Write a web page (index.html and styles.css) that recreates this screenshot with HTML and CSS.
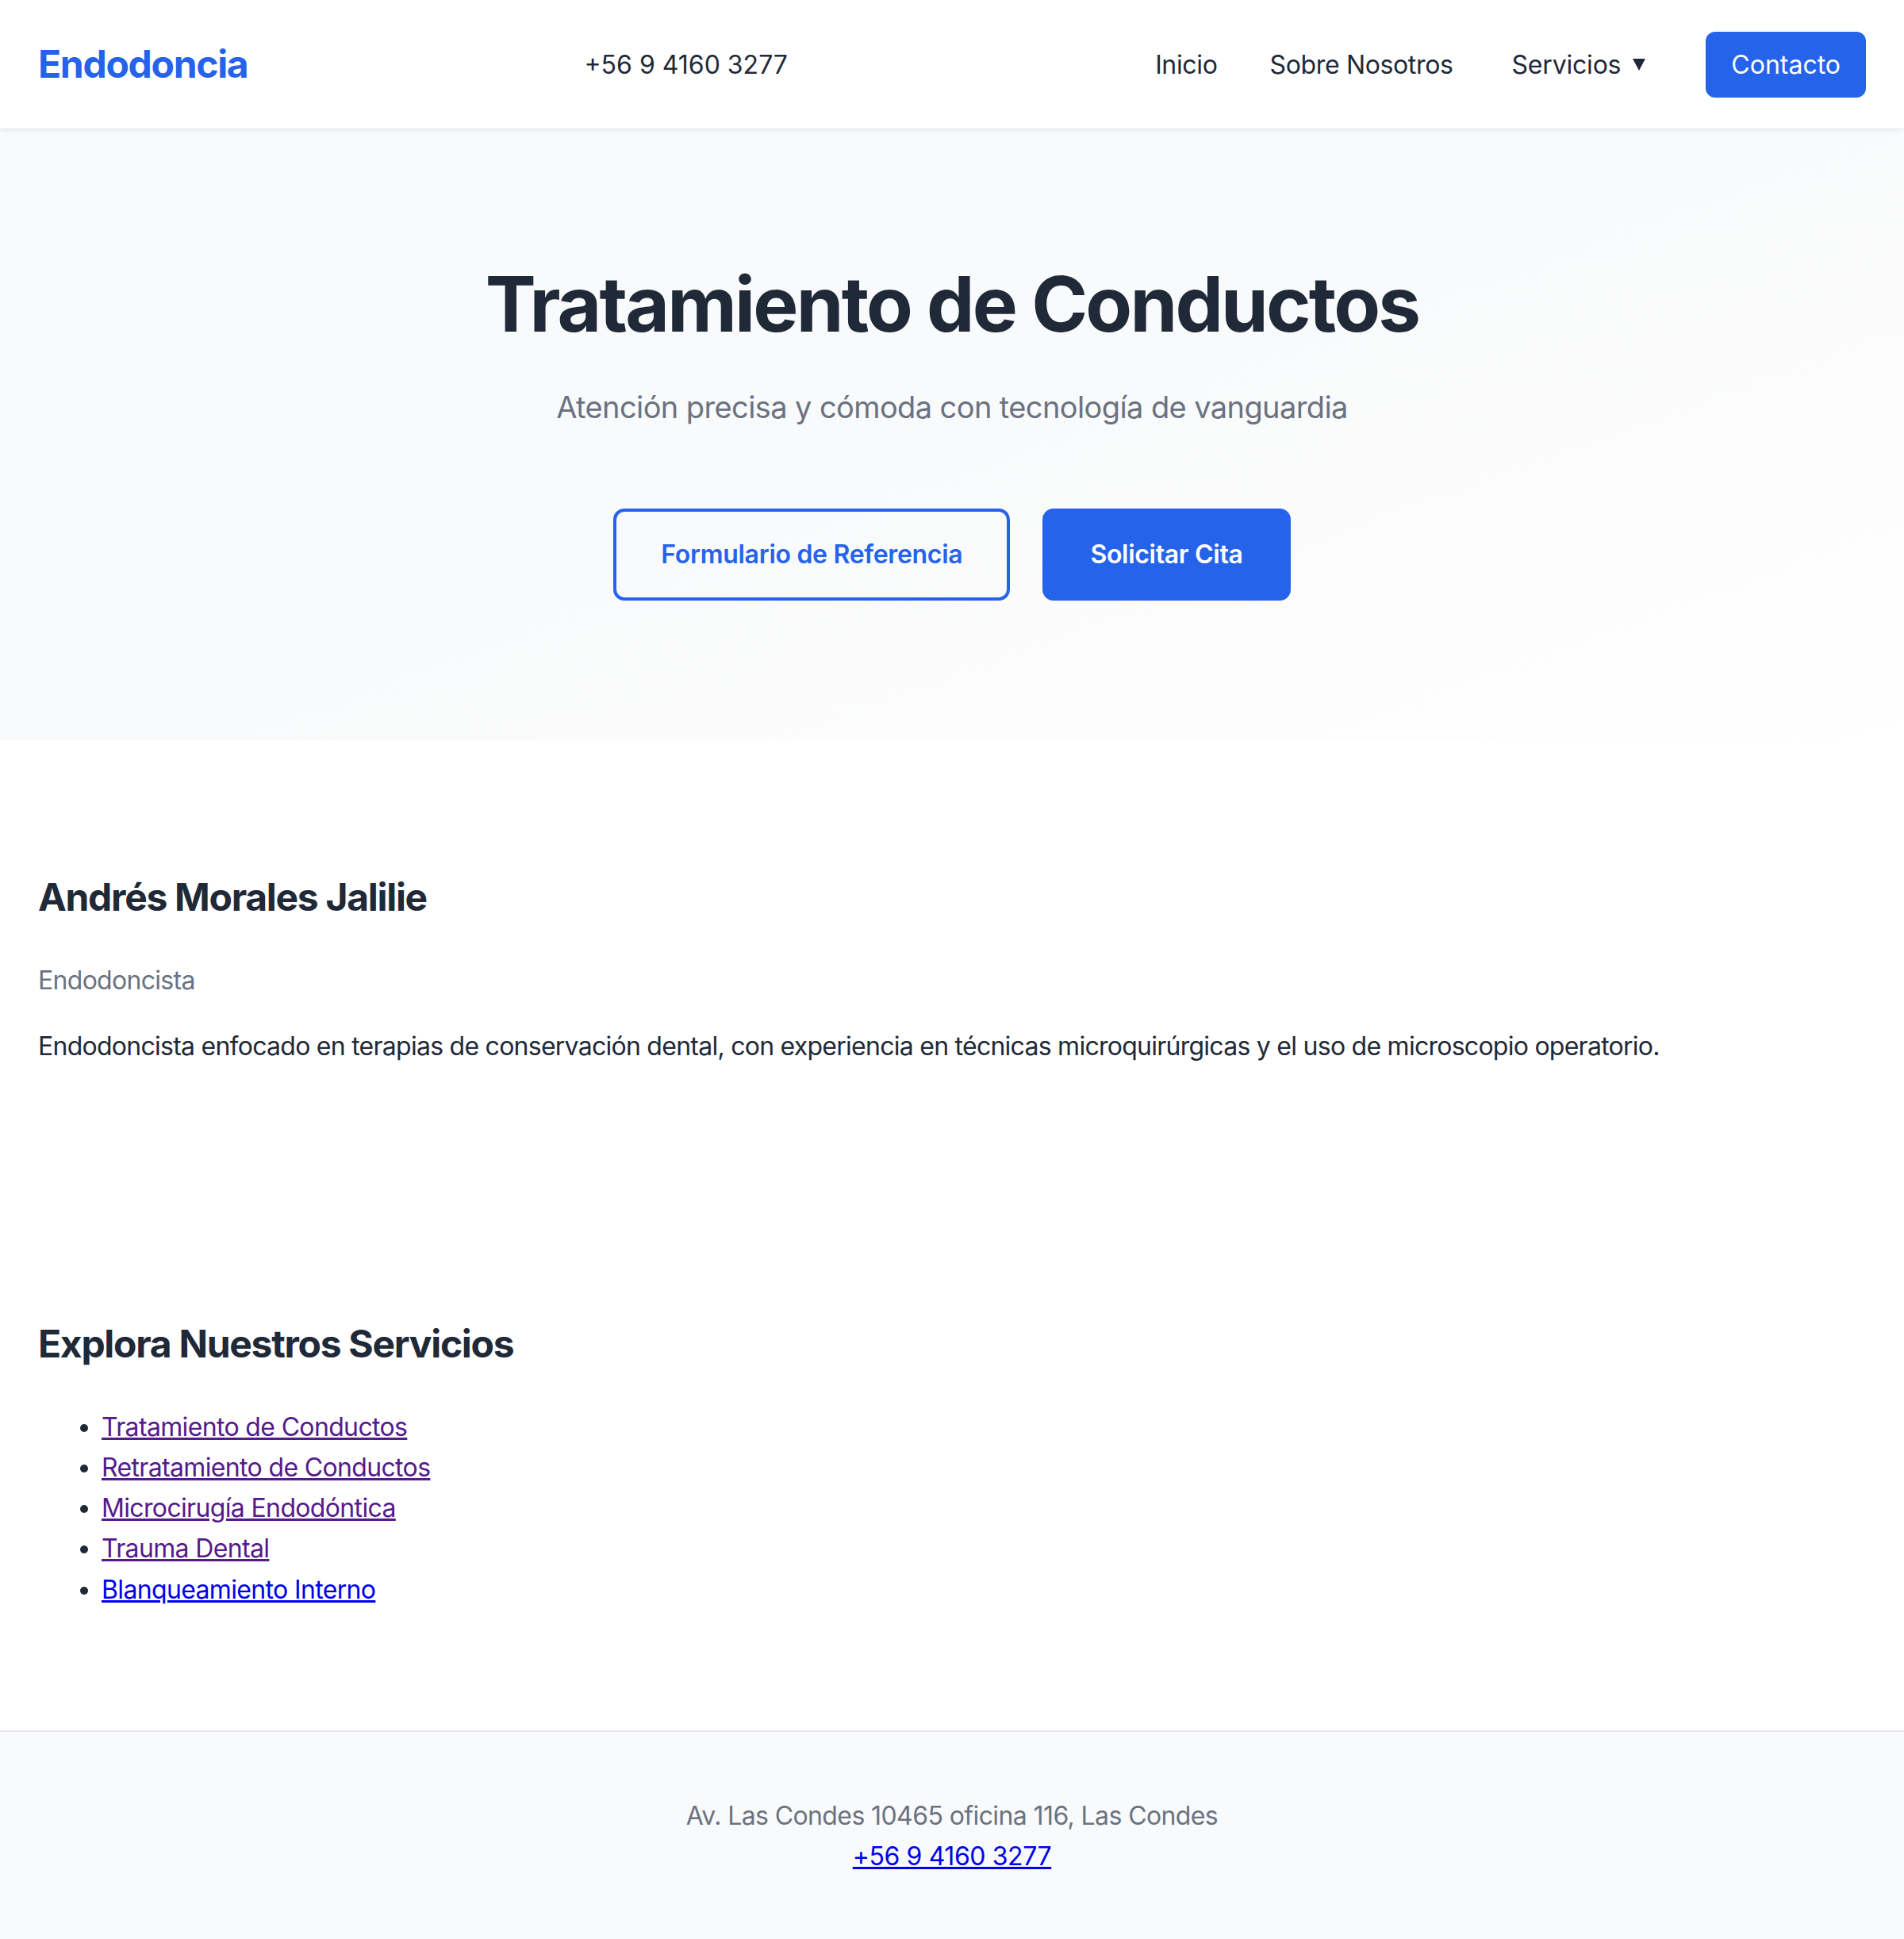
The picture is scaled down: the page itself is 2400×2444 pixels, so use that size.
FILE: index.html
```html
<!DOCTYPE html>
<html lang="es">
<head>
<meta charset="utf-8">
<title>Tratamiento de Conductos - Endodoncia</title>
<link rel="stylesheet" href="styles.css">
</head>
<body>
<header class="site-header">
  <a class="logo" href="#">Endodoncia</a>
  <span class="header-phone">+56 9 4160 3277</span>
  <nav class="main-nav">
    <a class="nav-link nav-first" href="#">Inicio</a>
    <a class="nav-link" href="#">Sobre Nosotros</a>
    <span class="nav-dropdown">Servicios <span class="caret"></span></span>
    <a class="btn-contact" href="#">Contacto</a>
  </nav>
</header>

<section class="hero">
  <h1 class="hero-title">Tratamiento de Conductos</h1>
  <p class="hero-sub">Atención precisa y cómoda con tecnología de vanguardia</p>
  <div class="hero-actions">
    <a class="btn btn-outline" href="#">Formulario de Referencia</a>
    <a class="btn btn-solid" href="#">Solicitar Cita</a>
  </div>
</section>

<section class="section">
  <h2 class="section-title">Andrés Morales Jalilie</h2>
  <p class="role">Endodoncista</p>
  <p class="bio">Endodoncista enfocado en terapias de conservación dental, con experiencia en técnicas microquirúrgicas y el uso de microscopio operatorio.</p>
</section>

<section class="section">
  <h2 class="section-title">Explora Nuestros Servicios</h2>
  <ul class="service-list">
    <li><a class="visited" href="#">Tratamiento de Conductos</a></li>
    <li><a class="visited" href="#">Retratamiento de Conductos</a></li>
    <li><a class="visited" href="#">Microcirugía Endodóntica</a></li>
    <li><a class="visited" href="#">Trauma Dental</a></li>
    <li><a class="unvisited" href="#">Blanqueamiento Interno</a></li>
  </ul>
</section>

<footer class="site-footer">
  <p class="address">Av. Las Condes 10465 oficina 116, Las Condes</p>
  <a class="footer-phone" href="#">+56 9 4160 3277</a>
</footer>
</body>
</html>
```

FILE: styles.css
```css
html, body {
  margin: 0;
  padding: 0;
}
body {
  font-family: Inter, "Liberation Sans", sans-serif;
  font-size: 32px;
  line-height: 1.6;
  color: #1f2937;
  background: #ffffff;
}

/* Header */
.site-header {
  display: flex;
  align-items: center;
  padding: 40px 48px 39px 48px;
  background: #ffffff;
  border-bottom: 1px solid #e5e7eb;
  box-shadow: 0 2px 6px rgba(0, 0, 0, 0.06);
  position: relative;
  z-index: 1;
}
.logo {
  font-size: 48px;
  font-weight: 700;
  color: #2563eb;
  text-decoration: none;
  letter-spacing: -1.3px;
}
.header-phone {
  margin-left: 424px;
  color: #1f2937;
}
.main-nav {
  margin-left: auto;
  display: flex;
  align-items: center;
}
.nav-link {
  color: #1f2937;
  text-decoration: none;
  letter-spacing: -0.35px;
  margin-left: 66px;
}
.nav-first {
  margin-left: 0;
}
.nav-dropdown {
  margin-left: 62px;
  padding: 0 12px;
  display: flex;
  align-items: center;
  letter-spacing: -0.2px;
  color: #1f2937;
}
.caret {
  display: inline-block;
  width: 0;
  height: 0;
  margin-left: 15px;
  border-left: 8px solid transparent;
  border-right: 8px solid transparent;
  border-top: 15px solid #1f2937;
}
.btn-contact {
  margin-left: 64px;
  background: #2563eb;
  color: #ffffff;
  text-decoration: none;
  padding: 16px 32px;
  border-radius: 12px;
}

/* Hero */
.hero {
  background: linear-gradient(160deg, #f8fafc 0%, #f9fafb 50%, #ffffff 100%);
  padding: 80px 48px 80px;
  text-align: center;
}
.hero-title {
  font-size: 96px;
  font-weight: 700;
  line-height: 1.6;
  letter-spacing: -2.8px;
  margin: 64px 0 20px;
  color: #1f2937;
}
.hero-sub {
  font-size: 38px;
  line-height: 64px;
  letter-spacing: -0.6px;
  color: #6b7280;
  margin: 0 0 96px;
}
.hero-actions {
  display: flex;
  justify-content: center;
  gap: 41px;
  margin-bottom: 96px;
}
.btn {
  display: inline-block;
  font-weight: 600;
  text-decoration: none;
  line-height: 48px;
  letter-spacing: -0.3px;
  padding: 30px 56px;
  border: 4px solid #2563eb;
  border-radius: 14px;
}
.btn-outline {
  color: #2563eb;
  background: transparent;
}
.btn-solid {
  color: #ffffff;
  background: #2563eb;
}

/* Sections */
.section {
  padding: 120px 48px;
}
.section-title {
  font-size: 48px;
  font-weight: 700;
  line-height: 1.6;
  letter-spacing: -1.3px;
  margin: 40px 0;
  color: #1f2937;
}
.role {
  color: #6b7280;
  letter-spacing: -0.7px;
  margin: 32px 0;
}
.bio {
  margin: 32px 0;
  letter-spacing: -0.74px;
  color: #1f2937;
}
.service-list {
  margin: 32px 0;
  padding-left: 80px;
  letter-spacing: -0.65px;
}
.service-list a {
  text-decoration: underline;
}
.service-list a.visited {
  color: #551a8b;
}
.service-list a.unvisited {
  color: #0000ee;
}

/* Footer */
.site-footer {
  background: #f9fafb;
  border-top: 2px solid #e5e7eb;
  text-align: center;
  padding: 80px 48px 82px;
}
.address {
  margin: 0;
  letter-spacing: -0.6px;
  color: #6b7280;
}
.footer-phone {
  color: #0000ee;
  letter-spacing: -0.4px;
  text-decoration: underline;
}
```
